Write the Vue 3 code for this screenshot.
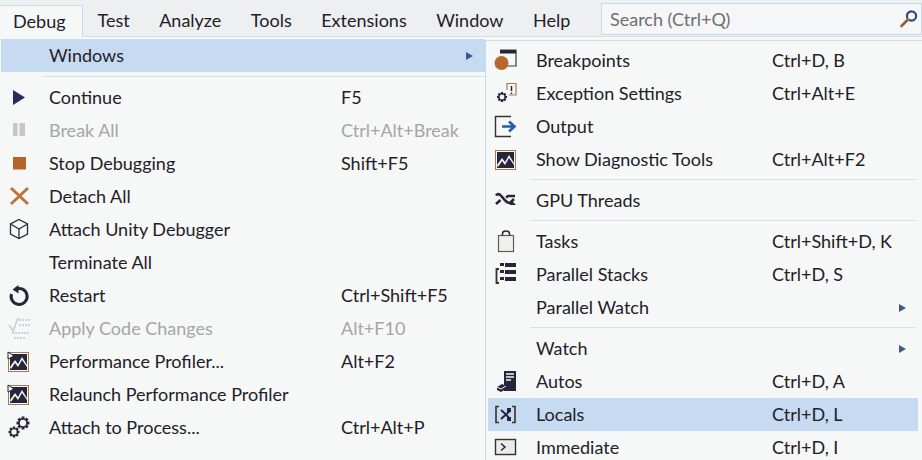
<template>
  <div class="page">
    <div class="menubar">
      <div class="tab tab-active">Debug</div>
      <div v-for="name in menuNames" :key="name" class="tab">{{ name }}</div>
      <div class="search">
        <span>Search (Ctrl+Q)</span>
        <svg width="20" height="20" viewBox="0 0 20 20" v-html="searchIcon"></svg>
      </div>
    </div>

    <div class="menu">
      <template v-for="(item, i) in mainItems" :key="i">
        <div v-if="item.sep" class="sep"></div>
        <div v-else class="row" :class="{ selected: item.selected, disabled: item.disabled }">
          <svg class="ico" width="24" height="25" viewBox="0 0 24 25" v-html="icons[item.icon] || ''"></svg>
          <span class="label">{{ item.label }}</span>
          <span class="keys">{{ item.keys }}</span>
          <span v-if="item.more" class="arrow"></span>
        </div>
      </template>
    </div>

    <div class="submenu">
      <template v-for="(item, i) in subItems" :key="i">
        <div v-if="item.sep" class="sep"></div>
        <div v-else class="row" :class="{ selected: item.selected }">
          <svg class="ico" width="24" height="25" viewBox="0 0 24 25" v-html="icons[item.icon] || ''"></svg>
          <span class="label">{{ item.label }}</span>
          <span class="keys">{{ item.keys }}</span>
          <span v-if="item.more" class="arrow"></span>
        </div>
      </template>
    </div>
  </div>
</template>

<script setup>
const menuNames = ['Test', 'Analyze', 'Tools', 'Extensions', 'Window', 'Help']

const mainItems = [
  { label: 'Windows', selected: true, more: true },
  { sep: true },
  { label: 'Continue', keys: 'F5', icon: 'play' },
  { label: 'Break All', keys: 'Ctrl+Alt+Break', icon: 'pause', disabled: true },
  { label: 'Stop Debugging', keys: 'Shift+F5', icon: 'stop' },
  { label: 'Detach All', icon: 'cross' },
  { label: 'Attach Unity Debugger', icon: 'cube' },
  { label: 'Terminate All' },
  { label: 'Restart', keys: 'Ctrl+Shift+F5', icon: 'restart' },
  { label: 'Apply Code Changes', keys: 'Alt+F10', icon: 'apply', disabled: true },
  { label: 'Performance Profiler...', keys: 'Alt+F2', icon: 'perf' },
  { label: 'Relaunch Performance Profiler', icon: 'perf' },
  { label: 'Attach to Process...', keys: 'Ctrl+Alt+P', icon: 'gears' }
]

const subItems = [
  { label: 'Breakpoints', keys: 'Ctrl+D, B', icon: 'breakpoint' },
  { label: 'Exception Settings', keys: 'Ctrl+Alt+E', icon: 'exception' },
  { label: 'Output', icon: 'output' },
  { label: 'Show Diagnostic Tools', keys: 'Ctrl+Alt+F2', icon: 'diag' },
  { sep: true },
  { label: 'GPU Threads', icon: 'gpu' },
  { sep: true },
  { label: 'Tasks', keys: 'Ctrl+Shift+D, K', icon: 'tasks' },
  { label: 'Parallel Stacks', keys: 'Ctrl+D, S', icon: 'stacks' },
  { label: 'Parallel Watch', more: true },
  { sep: true },
  { label: 'Watch', more: true },
  { label: 'Autos', keys: 'Ctrl+D, A', icon: 'autos' },
  { label: 'Locals', keys: 'Ctrl+D, L', icon: 'locals', selected: true },
  { label: 'Immediate', keys: 'Ctrl+D, I', icon: 'immediate' }
]

const searchIcon = `
  <circle cx="12.5" cy="7" r="4.6" fill="none" stroke="#2c4a6e" stroke-width="2.2"/>
  <path d="M9 10.5 2.5 17" stroke="#b3722f" stroke-width="3" stroke-linecap="round"/>
  <path d="M8.5 11 3 16.5" stroke="#2c4a6e" stroke-width="1"/>`

const gear = (cx, cy, r, color) => {
  const teeth = [0, 45, 90, 135]
    .map((a) => `<rect x="${cx - r * 0.22}" y="${cy - r}" width="${r * 0.44}" height="${r * 2}" fill="${color}" transform="rotate(${a} ${cx} ${cy})"/>`)
    .join('')
  return `${teeth}<circle cx="${cx}" cy="${cy}" r="${r * 0.62}" fill="#f6f7f8" stroke="${color}" stroke-width="${r * 0.26}"/>`
}

const chart = (flag) => `
  <rect x="2.5" y="3.5" width="20" height="19" fill="#f7f7f7" stroke="#a8794c" stroke-width="1"/>
  <rect x="4" y="5" width="17" height="16" fill="#26263a"/>
  <path d="M4 18 9 11 12 15 16 8 21 16V18L16 11 12 18 9 14 5 20Z" fill="#f4f4f4"/>
  ${flag ? '<path d="M2 3 8 7 2 10Z" fill="#f7f7f7" stroke="#26263a" stroke-width="1"/>' : ''}`

const icons = {
  play: '<path d="M7 5 19 12.5 7 20Z" fill="#2c2c58"/>',
  pause: '<path d="M7 5h4.500v13H7zM13.500 5H19v13h-5.500z" fill="#c9c6bf"/>',
  stop: '<rect x="7" y="6" width="13" height="12.500" fill="#b5652a"/>',
  cross: '<path d="M5 4 22 20M22 4 5 20" stroke="#bb7637" stroke-width="3" fill="none"/>',
  cube: '<path d="M13 2.500 21.500 7V17L13 21.500 4.500 17V7ZM4.500 7 13 12 21.500 7M13 12V21.500" fill="none" stroke="#2b2b40" stroke-width="1.300"/>',
  restart: '<path d="M9.500 6.300A8 8 0 1 1 5.500 11" fill="none" stroke="#26263a" stroke-width="3"/><path d="M12.500 2 12.500 10.500 6.500 6.500Z" fill="#26263a"/>',
  apply: '<path d="M3 9 7 15 12 2" fill="none" stroke="#d3d2cf" stroke-width="2"/><path d="M13 4h11M13 9h11M6 17h18M8 22h12" stroke="#c8d2dc" stroke-width="2" stroke-dasharray="2 1"/>',
  perf: chart(true),
  diag: chart(false),
  gears: gear(8, 17, 5.500, '#26263a') + gear(17, 8, 6.500, '#26263a'),
  breakpoint: '<path d="M7 2H23V18H15" fill="none" stroke="#3a3a46" stroke-width="1.200"/><rect x="7" y="2" width="16" height="3.500" fill="#26263a"/><circle cx="8.500" cy="15" r="7" fill="#b5692c"/>',
  exception: gear(9, 16, 5, '#26263a') + '<path d="M14 9V2.500H23V14H16" fill="none" stroke="#a8794c" stroke-width="1.200"/><path d="M18.500 5v5M18.500 11.500v1.500" stroke="#26263a" stroke-width="1.500"/>',
  output: '<path d="M18 2.500H2.500V22.500H18" fill="none" stroke="#3a3026" stroke-width="1.400"/><path d="M9 12.500H21M16 7.500 21.500 12.500 16 17.500" fill="none" stroke="#2a5ca8" stroke-width="2.600"/>',
  gpu: '<path d="M3 7.500C5 5 7 6 10 10S15 15 17 15L21 11M3 16 7.500 12M13 9.500 15 8H22" fill="none" stroke="#26263a" stroke-width="2.600"/><path d="M18 12 23 17H17Z" fill="#26263a"/>',
  tasks: '<rect x="5.500" y="6.500" width="15" height="16" fill="#eef0f0" stroke="#6b5a48" stroke-width="1.200"/><path d="M9.500 6.500V4.500A3.500 2.500 0 0 1 16.500 4.500V6.500" fill="none" stroke="#26263a" stroke-width="1.500"/>',
  stacks: '<path d="M7 1h4v3H7zM12 1h11v4H12zM7 8h4v3H7zM12 8h11v4H12zM7 15h4v3H7zM12 15h11v4H12z" fill="#26263a"/><path d="M6 7H3.500V21H6" fill="none" stroke="#3a3026" stroke-width="1.800"/>',
  autos: '<path d="M11 2H23V22H11Z" fill="#26263a"/><path d="M13 5h8M13 8h8M13 11h5" stroke="#f4f4f4" stroke-width="1.400"/><path d="M4 18 9 15 13 17 13 20 8 23 4 21Z" fill="#26263a"/><path d="M4 18 8 20 13 17" fill="none" stroke="#f4f4f4"/>',
  locals: '<path d="M6 4.500H3V20.500H6M19 4.500H22V20.500H19" fill="none" stroke="#3a3026" stroke-width="1.600"/><path d="M8 8 13 12.500 17 9M8 17 13 12.500 17 17" fill="none" stroke="#26263a" stroke-width="2"/><path d="M14 6h4v4h-4zM14 15h4v4h-4z" fill="#26263a"/>',
  immediate: '<rect x="2.500" y="4.500" width="20" height="15" fill="#e8ecec" stroke="#3a3026" stroke-width="1.400"/><path d="M8 8.500 12 12 8 15.500" fill="none" stroke="#26263a" stroke-width="1.500"/>'
}
</script>

<style>
html, body {
  margin: 0;
  background: #f6f7f7;
}
</style>

<style scoped>
.page {
  position: relative;
  width: 922px;
  height: 460px;
  overflow: hidden;
  background: #f6f7f7;
  color: #1f2028;
  font-family: Lato, "Open Sans", sans-serif;
  font-size: 18px;
}

.menubar {
  display: flex;
  height: 37px;
  background: #eeeff0;
  border-bottom: 1px solid #d9dde0;
  box-sizing: border-box;
}

.tab {
  display: flex;
  align-items: center;
  padding: 0 14.75px;
  margin-top: 5px;
  height: 30px;
}

.tab-active {
  width: 82.75px;
  height: 32px;
  box-sizing: border-box;
  padding: 0 0 2px 13px;
  background: #f6f7f7;
  border-top: 1px solid #cfdce9;
  border-right: 1px solid #c6d7e9;
}

.search {
  display: flex;
  align-items: center;
  justify-content: space-between;
  box-sizing: border-box;
  width: 321px;
  height: 32px;
  margin: 3px 0 0 auto;
  padding: 0 2px 0 8px;
  background: #f5f6f7;
  border: 1px solid #c9d9ea;
  color: #6f6f72;
}

.menu {
  width: 485px;
  margin-top: 2px;
}

.submenu {
  position: absolute;
  left: 485px;
  top: 40px;
  width: 437px;
  box-sizing: border-box;
  padding: 3px 4px 0 2px;
  background: #f6f7f7;
  border-left: 1px solid #c6d9ee;
  border-top: 1px solid #d9dde0;
}

.row {
  position: relative;
  display: flex;
  align-items: center;
  height: 33px;
}

.menu .row {
  margin-left: 1px;
}

.row.selected {
  background: #c6dbf1;
}

.row.disabled {
  color: #a7a6a4;
}

.ico {
  flex: none;
  margin-left: 5px;
}

.label {
  width: 292px;
  margin-left: 19px;
  padding-bottom: 2px;
  white-space: nowrap;
}

.submenu .label {
  width: 236px;
}

.keys {
  padding-bottom: 2px;
  white-space: nowrap;
}

.arrow {
  position: absolute;
  right: 12px;
  top: 13px;
  border-left: 7px solid #3d5a8a;
  border-top: 4px solid transparent;
  border-bottom: 4px solid transparent;
}

.sep {
  height: 1px;
  margin: 4px 0 4px 43px;
  background: #d5e0ec;
}

.submenu .sep {
  margin: 3px 2px 4px 42px;
}
</style>
